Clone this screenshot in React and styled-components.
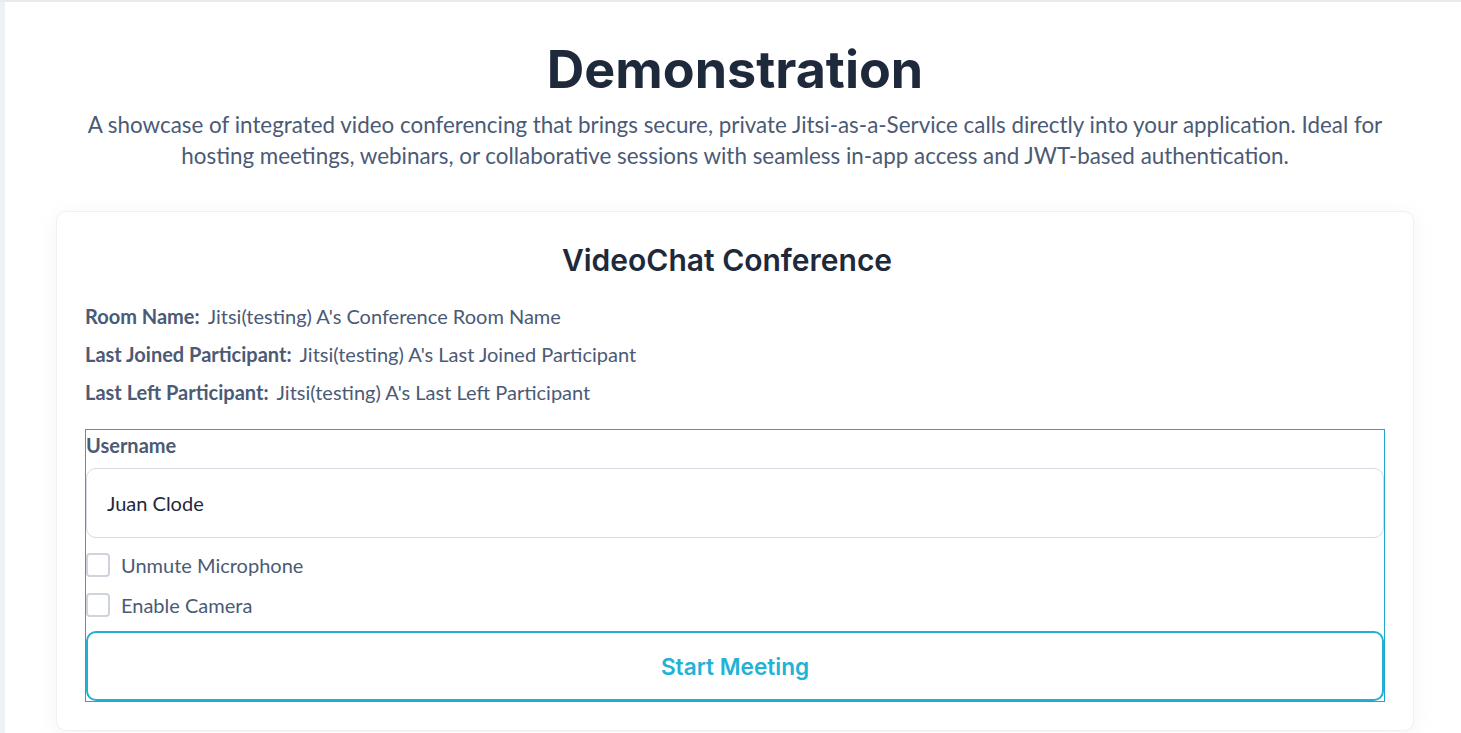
import React, { useState } from "react";
import styled, { createGlobalStyle } from "styled-components";

const GlobalStyle = createGlobalStyle`
  body {
    margin: 0;
    background: #ffffff;
    font-family: "Lato", "Noto Sans", sans-serif;
  }
  * { box-sizing: border-box; }
`;

export default function App() {
  const [username, setUsername] = useState("Juan Clode");
  const [mic, setMic] = useState(false);
  const [camera, setCamera] = useState(false);

  const info = [
    { label: "Room Name:", value: "Jitsi(testing) A's Conference Room Name" },
    { label: "Last Joined Participant:", value: "Jitsi(testing) A's Last Joined Participant" },
    { label: "Last Left Participant:", value: "Jitsi(testing) A's Last Left Participant" },
  ];

  return (
    <>
      <GlobalStyle />
      <Layout>
        <SideEdge />
        <Main>
          <Title>Demonstration</Title>
          <Description>
            A showcase of integrated video conferencing that brings secure, private Jitsi-as-a-Service calls directly into your application. Ideal for hosting meetings, webinars, or collaborative sessions with seamless in-app access and JWT-based authentication.
          </Description>
          <Card>
            <CardTitle>VideoChat Conference</CardTitle>
            <InfoList>
              {info.map((row) => (
                <InfoRow key={row.label}>
                  <InfoLabel>{row.label}</InfoLabel>
                  <InfoValue>{row.value}</InfoValue>
                </InfoRow>
              ))}
            </InfoList>
            <Form onSubmit={(e) => e.preventDefault()}>
              <FieldLabel htmlFor="username">Username</FieldLabel>
              <TextInput
                id="username"
                value={username}
                onChange={(e) => setUsername(e.target.value)}
              />
              <CheckRow $top={15}>
                <Check type="checkbox" checked={mic} onChange={() => setMic(!mic)} />
                Unmute Microphone
              </CheckRow>
              <CheckRow $top={16}>
                <Check type="checkbox" checked={camera} onChange={() => setCamera(!camera)} />
                Enable Camera
              </CheckRow>
              <StartButton type="submit">Start Meeting</StartButton>
            </Form>
          </Card>
        </Main>
      </Layout>
    </>
  );
}

const Layout = styled.div`
  display: flex;
  min-height: 733px;
  border-top: 2px solid #e8eaed;
`;

const SideEdge = styled.div`
  width: 5px;
  flex-shrink: 0;
  background: #edf2f6;
`;

const Main = styled.main`
  flex: 1;
  padding: 37px 47px 0 51px;
  display: flex;
  flex-direction: column;
  align-items: center;
`;

const Title = styled.h1`
  margin: 0;
  font-family: "Inter", sans-serif;
  font-size: 52px;
  font-weight: 700;
  line-height: 62px;
  color: #1e293b;
`;

const Description = styled.p`
  margin: 8px 0 0;
  max-width: 1320px;
  text-align: center;
  font-size: 22.4px;
  line-height: 31px;
  color: #4b5a75;
`;

const Card = styled.section`
  margin-top: 40px;
  width: 100%;
  background: #ffffff;
  border: 1px solid #eef0f4;
  border-radius: 10px;
  box-shadow: 0 4px 20px rgba(148, 163, 184, 0.12);
  padding: 30px 28px 28px;
`;

const CardTitle = styled.h2`
  margin: 0;
  padding-right: 16px;
  text-align: center;
  font-family: "Inter", sans-serif;
  font-size: 30px;
  font-weight: 600;
  line-height: 36px;
  color: #1e293b;
`;

const InfoList = styled.div`
  margin-top: 24px;
  display: flex;
  flex-direction: column;
  gap: 10px;
`;

const InfoRow = styled.div`
  display: flex;
  gap: 8px;
  font-size: 20px;
  line-height: 28px;
  color: #4b5a75;
`;

const InfoLabel = styled.span`
  font-weight: 700;
`;

const InfoValue = styled.span`
  font-weight: 400;
`;

const Form = styled.form`
  margin-top: 23px;
  display: flex;
  flex-direction: column;
  border: 1px solid #1ea8d0;
`;

const FieldLabel = styled.label`
  padding-top: 2px;
  font-size: 20px;
  font-weight: 700;
  line-height: 26px;
  color: #4b5a75;
`;

const TextInput = styled.input`
  margin-top: 10px;
  height: 70px;
  border: 1px solid #d8dbe3;
  border-radius: 10px;
  padding: 0 20px;
  font-family: "Lato", sans-serif;
  font-size: 20px;
  color: #1e293b;
  outline: none;
`;

const CheckRow = styled.label`
  margin-top: ${(p) => p.$top}px;
  display: flex;
  align-items: center;
  gap: 11px;
  height: 24px;
  font-size: 20px;
  color: #4b5a75;
  cursor: pointer;
`;

const Check = styled.input`
  appearance: none;
  margin: 0;
  width: 24px;
  height: 24px;
  border: 2px solid #cfd4dc;
  border-radius: 4px;
  background: #fff;
  cursor: pointer;

  &:checked {
    background: #1fb0d4;
    border-color: #1fb0d4;
  }
`;

const StartButton = styled.button`
  margin-top: 14px;
  height: 70px;
  border: 2px solid #1fb0d4;
  border-radius: 10px;
  background: #ffffff;
  font-family: "Inter", sans-serif;
  font-size: 22.6px;
  font-weight: 600;
  color: #22b2d6;
  cursor: pointer;
`;
